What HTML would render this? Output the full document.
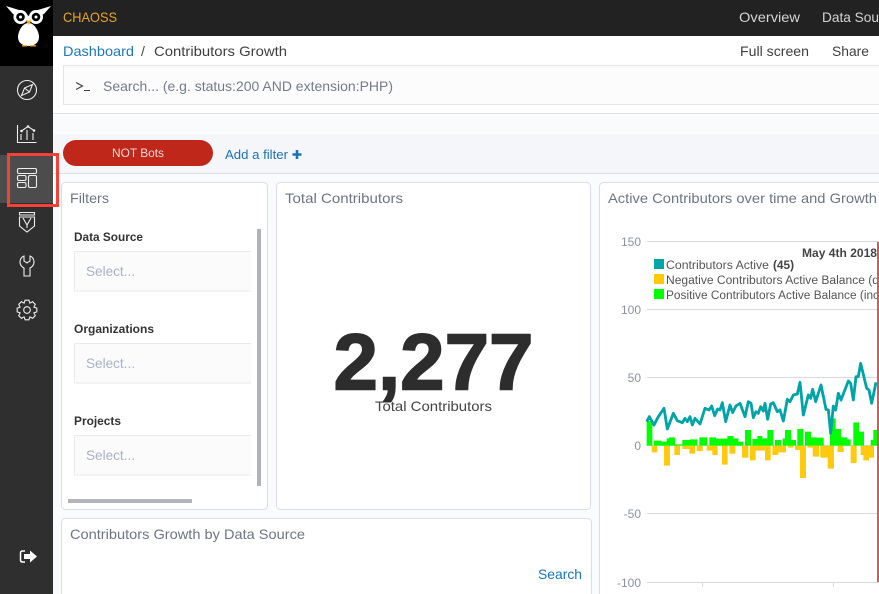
<!DOCTYPE html>
<html><head><meta charset="utf-8"><style>
html,body{margin:0;padding:0;width:879px;height:594px;overflow:hidden;background:#fafbfd}
svg{display:block}
text{font-family:"Liberation Sans",sans-serif;font-size:14px;white-space:pre}
.t{fill:#6d7583;font-size:14px}
.l{fill:#333;font-size:12px;font-weight:bold}
.s{fill:#a9b2c3;font-size:14px}
.a{fill:#8a92a0;font-size:12px;text-anchor:end}
.g{fill:#555;font-size:11.5px}
.i{fill:none;stroke:#eee;stroke-width:1.1}
</style></head><body>
<svg width="879" height="594" viewBox="0 0 879 594" xmlns="http://www.w3.org/2000/svg">
<rect width="879" height="594" fill="#fafbfd"/>
<!-- header -->
<rect x="53" y="0" width="826" height="36" fill="#222"/>
<text x="63" y="22" style="fill:#e8a524;font-size:14px" textLength="54" lengthAdjust="spacingAndGlyphs">CHAOSS</text>
<text x="739" y="22" style="fill:#d4d4d4" textLength="61" lengthAdjust="spacingAndGlyphs">Overview</text>
<text x="822" y="22" style="fill:#d4d4d4" textLength="57" lengthAdjust="spacingAndGlyphs">Data Sou</text>
<rect x="53" y="36" width="826" height="77" fill="#fff"/>
<text x="63" y="56" style="fill:#1f78b9" textLength="71" lengthAdjust="spacingAndGlyphs">Dashboard</text>
<text x="141" y="56" style="fill:#444">/</text>
<text x="154" y="56" style="fill:#3f3f3f" textLength="133" lengthAdjust="spacingAndGlyphs">Contributors Growth</text>
<text x="740" y="56" style="fill:#3f3f3f" textLength="69" lengthAdjust="spacingAndGlyphs">Full screen</text>
<text x="832" y="56" style="fill:#3f3f3f" textLength="37" lengthAdjust="spacingAndGlyphs">Share</text>
<rect x="63.5" y="65.5" width="830" height="39" fill="#fcfcfd" stroke="#e3e5ea"/>
<path d="M76 82.500l6.500 3.500-6.500 3.500" fill="none" stroke="#444" stroke-width="1.200"/><path d="M84 90.500h6" stroke="#444" stroke-width="1"/>
<text x="103" y="91" style="fill:#747b8a" textLength="290" lengthAdjust="spacingAndGlyphs">Search... (e.g. status:200 AND extension:PHP)</text>
<rect x="53" y="113" width="826" height="1" fill="#dfe2e8"/>
<rect x="53" y="134" width="826" height="39" fill="#f5f6fa"/>
<rect x="53" y="173" width="826" height="1" fill="#d9dde8"/>
<!-- filter bar -->
<rect x="63" y="140" width="150" height="26" rx="13" fill="#bf271b"/>
<text x="112" y="157" style="fill:#f3d9d6;font-size:12px" textLength="52" lengthAdjust="spacingAndGlyphs">NOT Bots</text>
<text x="225" y="159" style="fill:#1a73b5;font-size:13px" textLength="63" lengthAdjust="spacingAndGlyphs">Add a filter</text>
<path d="M297 150v9M292.500 154.500h9" stroke="#1a73b5" stroke-width="2.600"/>
<!-- panels -->
<g fill="#fff" stroke="#d9dde8">
<rect x="61.500" y="182.500" width="206" height="327" rx="4"/>
<rect x="276.500" y="182.500" width="314" height="327" rx="4"/>
<rect x="599.500" y="182.500" width="300" height="430" rx="4"/>
<rect x="61.500" y="518.500" width="530" height="100" rx="4"/>
</g>
<text class="t" x="70" y="203" textLength="39" lengthAdjust="spacingAndGlyphs">Filters</text>
<text class="t" x="285" y="203" textLength="118" lengthAdjust="spacingAndGlyphs">Total Contributors</text>
<text class="t" x="608" y="203" textLength="269" lengthAdjust="spacingAndGlyphs">Active Contributors over time and Growth</text>
<text class="t" x="70" y="539" textLength="235" lengthAdjust="spacingAndGlyphs">Contributors Growth by Data Source</text>
<text x="538" y="579" style="fill:#1a73b5" textLength="44" lengthAdjust="spacingAndGlyphs">Search</text>
<!-- filter controls -->
<text class="l" x="74" y="241" textLength="69" lengthAdjust="spacingAndGlyphs">Data Source</text>
<text class="l" x="74" y="333" textLength="80" lengthAdjust="spacingAndGlyphs">Organizations</text>
<text class="l" x="74" y="425" textLength="47" lengthAdjust="spacingAndGlyphs">Projects</text>
<g fill="#fbfbfc" stroke="#e8eaee">
<path d="M251 251.500H74.500V291H251"/>
<path d="M251 343.500H74.500V383H251"/>
<path d="M251 435.500H74.500V475H251"/>
</g>
<text class="s" x="86" y="276" textLength="49" lengthAdjust="spacingAndGlyphs">Select...</text>
<text class="s" x="86" y="368" textLength="49" lengthAdjust="spacingAndGlyphs">Select...</text>
<text class="s" x="86" y="460" textLength="49" lengthAdjust="spacingAndGlyphs">Select...</text>
<rect x="257" y="229" width="4" height="257" fill="#b0b2b8"/>
<rect x="68" y="499" width="124" height="4" fill="#b3b5ba"/>
<!-- metric -->
<text x="333.500" y="389.500" style="fill:#2d2d2d;font-size:80px;font-weight:bold;stroke:#2d2d2d;stroke-width:1.600" textLength="200" lengthAdjust="spacingAndGlyphs">2,277</text>
<text x="375" y="411" style="fill:#444" textLength="117" lengthAdjust="spacingAndGlyphs">Total Contributors</text>
<!-- chart -->
<g fill="#d8dadf">
<rect x="647" y="241" width="232" height="1"/><rect x="647" y="309" width="232" height="1"/>
<rect x="647" y="377" width="232" height="1"/><rect x="647" y="445" width="232" height="1"/>
<rect x="647" y="513" width="232" height="1"/><rect x="647" y="582" width="232" height="1"/>
<rect x="702" y="582" width="1" height="5"/><rect x="833" y="582" width="1" height="5"/>
</g>
<text class="a" x="641" y="246">150</text>
<text class="a" x="641" y="314">100</text>
<text class="a" x="641" y="382">50</text>
<text class="a" x="641" y="450">0</text>
<text class="a" x="641" y="518">-50</text>
<text class="a" x="641" y="587">-100</text>
<text x="802" y="257" style="fill:#444;font-size:12px;font-weight:bold" textLength="75" lengthAdjust="spacingAndGlyphs">May 4th 2018</text>
<rect x="654" y="259" width="10" height="10" fill="#00a5a6"/>
<rect x="654" y="274" width="10" height="10" fill="#ffc90e"/>
<rect x="654" y="289" width="10" height="10" fill="#00ff00"/>
<text class="g" x="666" y="269" textLength="103" lengthAdjust="spacingAndGlyphs">Contributors Active</text>
<text x="773" y="269" style="fill:#444;font-size:11.500px;font-weight:bold" textLength="21" lengthAdjust="spacingAndGlyphs">(45)</text>
<text class="g" x="666" y="284" textLength="213" lengthAdjust="spacingAndGlyphs">Negative Contributors Active Balance (d</text>
<text class="g" x="666" y="299" textLength="213" lengthAdjust="spacingAndGlyphs">Positive Contributors Active Balance (inc</text>
<g transform="translate(640 350) scale(.33333)">
<path fill="#ffc90e" d="M35 287V307H52V287ZM72 287V347H90V287ZM103 287V315H120V287ZM127 287V297H148V311H165V287ZM170 287V303H188V287ZM200 287V302H217V315H233V287ZM246 287V344H263V287ZM268 287V311H286V287ZM306 287V323H325V287ZM330 287V331H347V302H375V331H392V287ZM397 287V315H415V307H438V287ZM443 287V293H460V287ZM465 287V300H480V384H498V287ZM502 287V293H518V320H537V287ZM541 287V323H563V356H582V287ZM593 287V306H611V287ZM632 287V339H650V287ZM662 287V315H670V331H687V323H702V287Z"/>
<path fill="#00ff00" d="M20 287V213H37V287ZM42 287V272H65V275H80V265H87V262H105V283H127V270H150V268H172V287ZM178 287V262H202V287ZM208 287V262H228V266H262V258H280V265H295V275H310V287ZM315 287V240H333V287ZM337 287V267H352V258H367V265H382V240H400V287ZM405 287V270H423V287ZM428 287V265H435V240H453V270H468V287ZM472 287V237H490V287ZM495 287V245H513V262H530V263H551V287ZM570 287V205H587V237H603V262H622V268H632V287ZM640 287V217H657V245H672V287ZM692 287V270H700V240H715V287Z"/>
<polyline fill="none" stroke="#00a3a6" stroke-width="8.500" stroke-linejoin="round" points="20,215 28,200 42,225 55,200 72,175 82,237 100,190 112,212 127,218 135,205 142,215 150,200 157,225 165,205 180,222 195,175 207,180 215,168 224,197 233,177 240,180 247,158 257,215 270,165 278,188 288,168 300,160 315,200 325,155 333,160 340,203 348,185 355,190 362,170 370,183 375,160 383,208 392,162 400,158 412,185 420,180 430,213 442,148 450,155 460,135 472,132 480,97 490,195 505,135 512,145 518,118 527,155 543,105 558,178 565,180 572,250 580,168 587,180 595,130 603,150 625,93 632,100 640,150 648,80 655,80 662,40 680,115 687,120 695,160 708,97"/>
</g>
<rect x="877" y="242" width="2" height="340" fill="#c96060"/>
<!-- sidebar -->
<rect x="0" y="0" width="53" height="594" fill="#2f2f2f"/>
<rect x="0" y="0" width="53" height="66" fill="#000"/>
<!-- owl -->
<path fill="#fff" d="M28.500 23C22 23 18 32 18 37C18 43 23 46 28.500 46C34 46 39 43 39 37C39 32 35 23 28.500 23Z"/>
<path fill="#fff" d="M6 6L19 10Q25 12 28.500 16Q32 12 38 10L51 6L44 14L28.500 21L13 14Z"/>
<circle cx="20.500" cy="17" r="7" fill="#fff"/><circle cx="36" cy="17" r="7" fill="#fff"/>
<circle cx="20.500" cy="17" r="4.300" fill="#000"/><circle cx="36" cy="17" r="4.300" fill="#000"/>
<circle cx="20.500" cy="17" r="1.500" fill="#fff"/><circle cx="36" cy="17" r="1.500" fill="#fff"/>
<path d="M26 20.500h5.500l-2.700 4.500z" fill="#f5a623"/>
<path d="M22 45.800h5M30 45.800h6" stroke="#f5a623" stroke-width="1.400"/>
<!-- compass -->
<circle class="i" cx="27" cy="90" r="9.500"/>
<path class="i" d="M32.500 84.500L29.500 92L21.500 95.500L24.500 88ZM24.500 88L29.500 92"/>
<!-- chart icon -->
<path class="i" d="M17.500 125v17.500h19"/>
<path class="i" d="M21 140v-6M27 140v-10M33 140v-7"/>
<path class="i" d="M21.500 131l6.500-4.500 6 4"/>
<circle cx="21.500" cy="131" r="1.300" fill="#eee"/><circle cx="28" cy="126.500" r="1.300" fill="#eee"/><circle cx="34" cy="130.500" r="1.300" fill="#eee"/>
<!-- active dashboard -->
<rect x="0" y="155" width="53" height="48" fill="#4c4c4c"/>
<rect class="i" x="17.500" y="168.500" width="19" height="5" rx="1.500"/>
<rect class="i" x="17.500" y="175.500" width="8.500" height="5" rx="1.500"/>
<rect class="i" x="17.500" y="182.500" width="8.500" height="5" rx="1.500"/>
<rect class="i" x="28.500" y="175.500" width="8" height="12" rx="1.500"/>
<rect x="8.500" y="154.500" width="49" height="51" fill="none" stroke="#f44336" stroke-width="3"/>
<!-- shield -->
<path class="i" d="M19.500 212.500h15v2.500h-15z"/>
<path class="i" d="M19.500 217h15v9l-7.500 6-7.500-6z"/>
<path class="i" d="M23 218l4 7 4-7M27 225v3"/>
<!-- wrench -->
<path class="i" d="M24 256c-3 1-4 4-4 6 0 3 2 5 4 6v8h6v-8c2-1 4-3 4-6 0-2-1-5-4-6v5l-3 2-3-2z"/>
<!-- gear -->
<g transform="translate(27 310)">
<polygon class="i" points="2.870,-6.930 1.910,-9.820 -1.910,-9.820 -2.870,-6.930 -5.590,-8.290 -8.290,-5.590 -6.930,-2.870 -9.820,-1.910 -9.820,1.910 -6.930,2.870 -8.290,5.590 -5.590,8.290 -2.870,6.930 -1.910,9.820 1.910,9.820 2.870,6.930 5.590,8.290 8.290,5.590 6.930,2.870 9.820,1.910 9.820,-1.910 6.930,-2.870 8.290,-5.590 5.590,-8.290"/>
<circle class="i" cx="0" cy="0" r="3.300"/>
</g>
<!-- logout -->
<path d="M25 551h-2.500q-2 0-2 2v7q0 2 2 2h2.500" fill="none" stroke="#fff" stroke-width="1.500"/>
<path d="M24 554h6v-3.500l7 6-7 6v-3.500h-6z" fill="#fff"/>
</svg>
</body></html>
